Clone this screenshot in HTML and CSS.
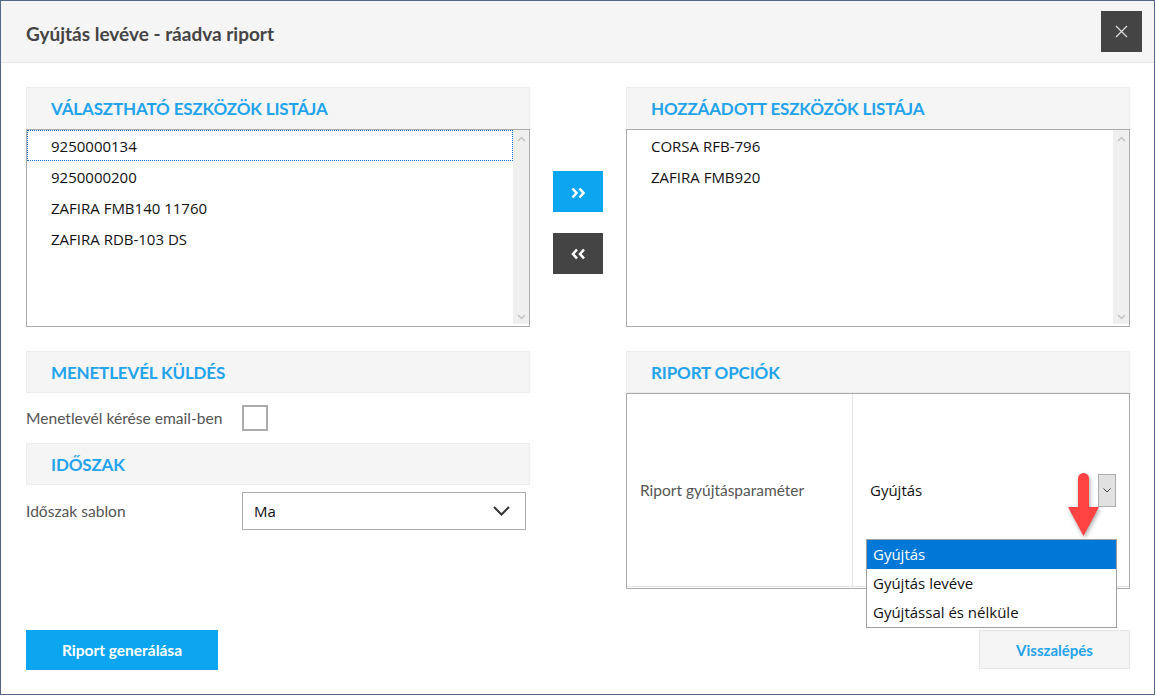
FILE: index.html
```html
<!DOCTYPE html>
<html lang="hu">

<head>
    <meta charset="UTF-8">
    <meta name="viewport" content="width=device-width, initial-scale=1.0">
    <title>Gyújtás levéve - ráadva riport</title>
    <link rel="stylesheet" href="styles.css">
</head>

<body>
    <div class="window">
        <div class="titlebar">
            <h1 class="title">Gyújtás levéve - ráadva riport</h1>
            <button class="close-btn" type="button">
                <svg width="13" height="13" viewBox="0 0 13 13"><path d="M1 1 L12 12 M12 1 L1 12" stroke="#dcdcdc" stroke-width="1.3" fill="none"/></svg>
            </button>
        </div>

        <div class="content">
            <div class="lists-row">
                <div class="panel">
                    <div class="panel-head">Választható eszközök listája</div>
                    <div class="listbox">
                        <div class="list-items">
                            <div class="list-item focused">9250000134</div>
                            <div class="list-item">9250000200</div>
                            <div class="list-item">ZAFIRA FMB140 11760</div>
                            <div class="list-item">ZAFIRA RDB-103 DS</div>
                        </div>
                        <div class="scrollbar">
                            <svg width="9" height="6" viewBox="0 0 9 6"><path d="M1 5 L4.5 1.5 L8 5" stroke="#c4c4c4" stroke-width="1.5" fill="none"/></svg>
                            <svg width="9" height="6" viewBox="0 0 9 6"><path d="M1 1 L4.5 4.5 L8 1" stroke="#c4c4c4" stroke-width="1.5" fill="none"/></svg>
                        </div>
                    </div>
                </div>

                <div class="move-btns">
                    <button class="move-btn add" type="button">
                        <svg width="15" height="12" viewBox="0 0 15 12"><path d="M1.5 1.5 L5.5 6 L1.5 10.5 M8.5 1.5 L12.5 6 L8.5 10.5" stroke="#fff" stroke-width="2.6" fill="none"/></svg>
                    </button>
                    <button class="move-btn remove" type="button">
                        <svg width="15" height="12" viewBox="0 0 15 12"><path d="M6 1.5 L2 6 L6 10.5 M13 1.5 L9 6 L13 10.5" stroke="#fff" stroke-width="2.6" fill="none"/></svg>
                    </button>
                </div>

                <div class="panel">
                    <div class="panel-head">Hozzáadott eszközök listája</div>
                    <div class="listbox">
                        <div class="list-items">
                            <div class="list-item">CORSA RFB-796</div>
                            <div class="list-item">ZAFIRA FMB920</div>
                        </div>
                        <div class="scrollbar">
                            <svg width="9" height="6" viewBox="0 0 9 6"><path d="M1 5 L4.5 1.5 L8 5" stroke="#c4c4c4" stroke-width="1.5" fill="none"/></svg>
                            <svg width="9" height="6" viewBox="0 0 9 6"><path d="M1 1 L4.5 4.5 L8 1" stroke="#c4c4c4" stroke-width="1.5" fill="none"/></svg>
                        </div>
                    </div>
                </div>
            </div>

            <div class="options-row">
                <div class="options-left">
                    <div class="panel-head">Menetlevél küldés</div>
                    <div class="form-row">
                        <label class="form-label">Menetlevél kérése email-ben</label>
                        <span class="checkbox"></span>
                    </div>
                    <div class="panel-head">Időszak</div>
                    <div class="form-row select-row">
                        <label class="form-label">Időszak sablon</label>
                        <div class="select">
                            <span>Ma</span>
                            <svg width="17" height="10" viewBox="0 0 17 10"><path d="M1 1 L8.5 8.5 L16 1" stroke="#333" stroke-width="2" fill="none"/></svg>
                        </div>
                    </div>
                </div>

                <div class="options-right">
                    <div class="panel-head">Riport opciók</div>
                    <div class="opt-table">
                        <div class="opt-cell opt-label">Riport gyújtásparaméter</div>
                        <div class="opt-cell opt-value">
                            <div class="select-wrap">
                                <div class="mini-select">
                                    <span>Gyújtás</span>
                                    <span class="mini-btn">
                                        <svg width="8" height="5" viewBox="0 0 8 5"><path d="M0.5 0.5 L4 4 L7.5 0.5" stroke="#444" stroke-width="1" fill="none"/></svg>
                                    </span>
                                </div>
                                <svg class="red-arrow" width="33" height="66" viewBox="0 0 33 66">
                                    <path d="M10 34 L10 5.5 A5.5 5.5 0 0 1 21 5.5 L21 34 L31 34 L15.5 63 L0 34 Z" fill="#ff4343"/>
                                </svg>
                                <ul class="dropdown">
                                    <li class="selected">Gyújtás</li>
                                    <li>Gyújtás levéve</li>
                                    <li>Gyújtással és nélküle</li>
                                </ul>
                            </div>
                        </div>
                    </div>
                </div>
            </div>

            <div class="footer">
                <button class="btn-primary" type="button">Riport generálása</button>
                <button class="btn-secondary" type="button">Visszalépés</button>
            </div>
        </div>
    </div>
</body>

</html>
```

FILE: styles.css
```css
* {
    box-sizing: border-box;
}

body {
    margin: 0;
    background: #fff;
    font-family: Lato, "Open Sans", sans-serif;
}

.window {
    width: 1155px;
    height: 695px;
    border: 1px solid #56658a;
    background: #fff;
}

.titlebar {
    height: 62px;
    padding: 3px 12px 0 25px;
    display: flex;
    align-items: center;
    justify-content: space-between;
    background-color: #f5f5f5;
    border-bottom: 1px solid #e6e6e6;
}

.title {
    margin: 0;
    font-size: 19px;
    font-weight: 700;
    color: #444;
}

.close-btn {
    width: 41px;
    height: 41px;
    margin-top: -3px;
    display: flex;
    align-items: center;
    justify-content: center;
    background-color: #444;
    border: 0px;
    padding: 0;
}

.content {
    padding: 24px 0 0 25px;
}

.lists-row,
.options-row {
    display: grid;
    grid-template-columns: 504px 96px 504px;
}

.options-row {
    margin-top: 24px;
}

.options-right {
    grid-column: 3;
}

.panel-head {
    height: 42px;
    padding-left: 24px;
    display: flex;
    align-items: center;
    background-color: #f5f5f5;
    border: 1px solid #ebebeb;
    font-size: 17px;
    font-weight: 700;
    color: #22a3eb;
    text-transform: uppercase;
    letter-spacing: -0.15px;
}

.panel .panel-head {
    border-bottom: 0px;
}

.listbox {
    height: 198px;
    display: flex;
    border: 1px solid #ababab;
}

.list-items {
    flex: 1;
}

.list-item {
    height: 31px;
    padding-left: 23px;
    line-height: 30px;
    font-family: "Open Sans", sans-serif;
    font-size: 15px;
    color: #111;
    border: 1px solid transparent;
}

.list-item.focused {
    border: 1px dotted #0a6fd1;
}

.scrollbar {
    width: 16px;
    height: 194px;
    padding: 6px 0 4px;
    display: flex;
    flex-direction: column;
    align-items: center;
    justify-content: space-between;
    background-color: #efefef;
}

.move-btns {
    padding-top: 84px;
    display: flex;
    flex-direction: column;
    align-items: center;
    gap: 21px;
}

.move-btn {
    width: 50px;
    height: 41px;
    padding: 0;
    display: flex;
    align-items: center;
    justify-content: center;
    border: 0px;
}

.move-btn.add {
    background-color: #0ca6f0;
    padding-top: 3px;
}

.move-btn.remove {
    background-color: #444;
    padding-top: 1px;
}

.form-row {
    height: 50px;
    display: flex;
    align-items: center;
}

.select-row {
    height: auto;
    margin-top: 7px;
}

.form-label {
    width: 216px;
    font-size: 15.6px;
    color: #555;
}

.checkbox {
    width: 26px;
    height: 26px;
    border: 2px solid #ababab;
    background: #fff;
}

.select {
    width: 284px;
    height: 38px;
    padding: 0 15px 0 11px;
    display: flex;
    align-items: center;
    justify-content: space-between;
    border: 1px solid #ababab;
    font-family: "Open Sans", sans-serif;
    font-size: 15px;
    color: #111;
}

.opt-table {
    height: 196px;
    display: grid;
    grid-template-columns: 225px 1fr;
    padding-bottom: 1px;
    border: 1px solid #ababab;
}

.opt-cell {
    display: flex;
    align-items: center;
    border-bottom: 1px solid #e3e3e3;
}

.opt-label {
    padding-left: 13px;
    font-size: 15.5px;
    color: #555;
}

.opt-value {
    padding-left: 13px;
    border-left: 1px solid #e3e3e3;
}

.select-wrap {
    position: relative;
    width: 251px;
}

.mini-select {
    height: 33px;
    padding-left: 4px;
    display: flex;
    align-items: center;
    justify-content: space-between;
    font-family: "Open Sans", sans-serif;
    font-size: 15px;
    color: #111;
}

.mini-btn {
    width: 18px;
    height: 33px;
    margin-right: 1px;
    display: flex;
    align-items: center;
    justify-content: center;
    background-color: #e1e1e1;
    border: 1px solid #adadad;
}

.red-arrow {
    position: absolute;
    left: 202px;
    top: -1px;
    filter: drop-shadow(1px 2px 2px rgba(0, 0, 0, 0.35));
}

.dropdown {
    position: absolute;
    top: 65px;
    left: 0;
    width: 251px;
    margin: 0;
    padding: 0;
    list-style: none;
    background: #fff;
    border: 1px solid #a0a0a0;
    font-family: "Open Sans", sans-serif;
    font-size: 15px;
    color: #111;
}

.dropdown li {
    height: 29px;
    padding-left: 6px;
    line-height: 29px;
}

.dropdown li.selected {
    background-color: #0078d7;
    color: #fff;
}

.footer {
    width: 1104px;
    margin-top: 41px;
    display: flex;
    justify-content: space-between;
}

.btn-primary {
    width: 192px;
    height: 40px;
    background-color: #0ca6f0;
    border: 0px;
    font-family: Lato, sans-serif;
    font-size: 15.5px;
    font-weight: 700;
    color: #fff;
}

.btn-secondary {
    width: 151px;
    height: 39px;
    background-color: #f5f5f5;
    border: 1px solid #e5e5e5;
    font-family: Lato, sans-serif;
    font-size: 15px;
    font-weight: 700;
    color: #22a3eb;
}
```
